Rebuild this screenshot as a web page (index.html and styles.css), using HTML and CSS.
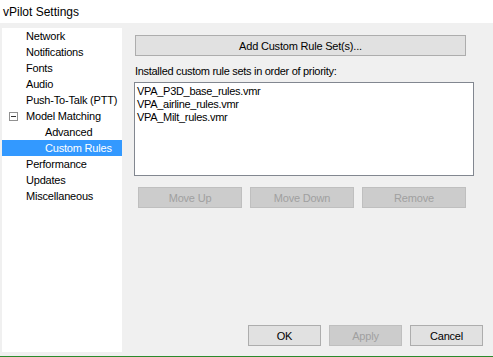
FILE: index.html
```html
<!DOCTYPE html>
<html lang="en">
<head>
  <meta charset="UTF-8">
  <meta name="viewport" content="width=device-width, initial-scale=1.0">
  <title>vPilot Settings</title>
  <link rel="stylesheet" href="styles.css">
</head>
<body>
  <div class="titlebar">vPilot Settings</div>
  <div class="window">
    <ul class="tree">
      <li class="node">Network</li>
      <li class="node">Notifications</li>
      <li class="node">Fonts</li>
      <li class="node">Audio</li>
      <li class="node">Push-To-Talk (PTT)</li>
      <li class="node parent"><span class="toggle"></span>Model Matching</li>
      <li class="node child">Advanced</li>
      <li class="node child selected">Custom Rules</li>
      <li class="node">Performance</li>
      <li class="node">Updates</li>
      <li class="node">Miscellaneous</li>
    </ul>
    <div class="pane">
      <button class="btn add-button">Add Custom Rule Set(s)...</button>
      <div class="caption">Installed custom rule sets in order of priority:</div>
      <ul class="listbox">
        <li>VPA_P3D_base_rules.vmr</li>
        <li>VPA_airline_rules.vmr</li>
        <li>VPA_Milt_rules.vmr</li>
      </ul>
      <div class="order-buttons">
        <button class="btn" disabled>Move Up</button>
        <button class="btn" disabled>Move Down</button>
        <button class="btn" disabled>Remove</button>
      </div>
      <div class="footer">
        <button class="btn">OK</button>
        <button class="btn" disabled>Apply</button>
        <button class="btn">Cancel</button>
      </div>
    </div>
  </div>
  <div class="statusline"></div>
</body>
</html>
```

FILE: styles.css
```css
body {
  font-family: 'Liberation Sans', Arial, sans-serif;
  margin: 0;
  padding: 0;
  width: 493px;
  height: 357px;
  background-color: #f0f0f0;
  display: flex;
  flex-direction: column;
  overflow: hidden;
  color: #000;
}
.titlebar {
  height: 23px;
  box-sizing: border-box;
  padding: 2px 0 0 3px;
  line-height: 21px;
  font-size: 12px;
  background: #fff;
}
.window {
  flex: 1;
  display: flex;
  flex-direction: row;
}
.tree {
  list-style: none;
  margin: 5px 0 4px 2px;
  padding: 0;
  width: 120px;
  background: #fff;
  font-size: 11px;
  letter-spacing: -0.2px;
}
.node {
  height: 16px;
  line-height: 16px;
  padding-left: 24px;
  white-space: nowrap;
}
.node.parent {
  display: flex;
  align-items: center;
  padding-left: 7px;
}
.node.child {
  padding-left: 43px;
}
.node.selected {
  background: #3399ff;
  color: #fff;
}
.toggle {
  position: relative;
  width: 9px;
  height: 9px;
  box-sizing: border-box;
  border: 1px solid #919191;
  background: #fff;
  margin-right: 8px;
}
.toggle::after {
  content: '';
  position: absolute;
  left: 1px;
  top: 3px;
  width: 5px;
  height: 1px;
  background: #333;
}
.pane {
  flex: 1;
  display: flex;
  flex-direction: column;
  padding-left: 13px;
}
.btn {
  font-family: 'Liberation Sans', Arial, sans-serif;
  font-size: 11px;
  letter-spacing: -0.2px;
  height: 21px;
  padding: 0;
  margin: 0;
  background: #e1e1e1;
  border: 1px solid #adadad;
  color: #000;
  border-radius: 0;
}
.btn:disabled {
  background: #cccccc;
  border-color: #bfbfbf;
  color: #a0a0a0;
}
.add-button {
  margin-top: 12px;
  width: 331px;
}
.caption {
  margin-top: 9px;
  height: 13px;
  line-height: 13px;
  font-size: 11px;
  letter-spacing: -0.3px;
}
.listbox {
  list-style: none;
  margin: 4px 0 0 -1px;
  padding: 2px 2px;
  width: 340px;
  height: 94px;
  box-sizing: border-box;
  background: #fff;
  border: 1px solid #828790;
  font-size: 11px;
  letter-spacing: -0.3px;
}
.listbox li {
  height: 13px;
  line-height: 13px;
}
.order-buttons {
  display: flex;
  gap: 8px;
  margin: 11px 0 0 3px;
}
.order-buttons .btn {
  width: 104px;
}
.footer {
  margin-top: auto;
  margin-bottom: 10px;
  padding-right: 10px;
  display: flex;
  justify-content: flex-end;
  gap: 8px;
}
.footer .btn {
  width: 73px;
}
.statusline {
  height: 1px;
  background: #2b8a2b;
}
```
